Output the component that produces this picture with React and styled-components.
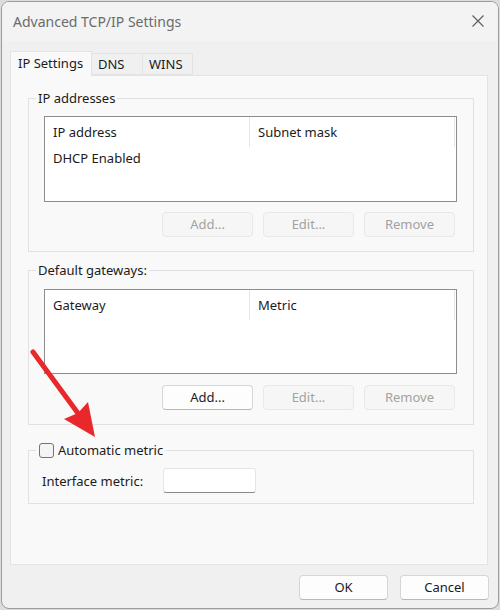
import React from 'react';
import styled, { createGlobalStyle } from 'styled-components';

const GlobalStyle = createGlobalStyle`
  html, body {
    margin: 0;
    padding: 0;
    background: #dcdcdc;
  }
  body {
    font-family: 'Noto Sans', 'Open Sans', 'Liberation Sans', sans-serif;
    font-size: 13px;
    color: #1b1b1b;
  }
`;

const Page = styled.div`
  position: relative;
  width: 500px;
  height: 610px;
  overflow: hidden;
`;

const Window = styled.div`
  box-sizing: border-box;
  width: 498px;
  height: 608px;
  margin: 1px 0 0 1px;
  border: 1px solid #9c9c9c;
  border-radius: 8px;
  overflow: hidden;
  display: flex;
  flex-direction: column;
  background: #f0f0f0;
`;

const TitleBar = styled.div`
  height: 38px;
  flex: none;
  display: flex;
  align-items: center;
  justify-content: space-between;
  padding: 0 13px 1px 11px;
  background: #f3f3f3;
  font-size: 14px;
  color: #6b6b6b;
`;

const CloseButton = styled.span`
  display: flex;
  width: 14px;
  height: 14px;
  color: #5c5c5c;
`;

const Body = styled.div`
  flex: 1;
  display: flex;
  flex-direction: column;
  padding: 9px 8px 0 8px;
`;

const TabStrip = styled.div`
  display: flex;
  align-items: flex-end;
  height: 25px;
  position: relative;
  z-index: 1;
`;

const Tab = styled.div`
  box-sizing: border-box;
  width: ${p => p.$w}px;
  height: ${p => (p.$active ? 25 : 22)}px;
  margin-bottom: ${p => (p.$active ? -1 : 0)}px;
  display: flex;
  align-items: center;
  padding: ${p => (p.$active ? '0 0 3px 7px' : '0 0 1px 6px')};
  border: 1px solid #e3e3e3;
  border-bottom: ${p => (p.$active ? 'none' : '1px solid #e3e3e3')};
  border-left: ${p => (p.$first || p.$active ? '1px solid #e3e3e3' : 'none')};
  background: ${p => (p.$active ? '#f9f9f9' : '#f0f0f0')};
  color: #1b1b1b;
`;

const Panel = styled.div`
  box-sizing: border-box;
  width: 478px;
  height: 490px;
  border: 1px solid #e3e3e3;
  background: #f9f9f9;
  padding: 13px 14px 0 17px;
  display: flex;
  flex-direction: column;
  gap: 9px;
`;

const Group = styled.fieldset`
  box-sizing: border-box;
  width: 446px;
  margin: ${p => p.$mt || 0}px 0 0;
  padding: 0;
  border: 1px solid #e1e1e1;
  min-width: 0;
`;

const Legend = styled.legend`
  margin-left: 7px;
  padding: 0 ${p => (p.$check ? 3 : 2)}px;
  line-height: 18px;
  display: flex;
  align-items: center;
  gap: 4px;
`;

const GroupBody = styled.div`
  padding: ${p => p.$pad};
`;

const ListBox = styled.div`
  box-sizing: border-box;
  height: ${p => p.$h}px;
  border: 1px solid #8d8d8d;
  background: #ffffff;
`;

const HeaderRow = styled.div`
  display: flex;
  height: 30px;
`;

const HeaderCell = styled.div`
  box-sizing: border-box;
  width: ${p => p.$w}px;
  padding-left: 8px;
  display: flex;
  align-items: center;
  border-right: 1px solid #e5e5e5;
`;

const Row = styled.div`
  padding-left: 8px;
  height: 22px;
  line-height: 22px;
`;

const ButtonRow = styled.div`
  display: flex;
  justify-content: flex-end;
  gap: 10px;
  margin-top: ${p => p.$mt}px;
  padding-right: 2px;
`;

const Button = styled.button`
  box-sizing: border-box;
  width: ${p => p.$w || 91}px;
  height: 25px;
  border-radius: 4px;
  font-family: inherit;
  font-size: 13px;
  padding: 0 0 1px;
  border: 1px solid ${p => (p.disabled ? '#e8e8e8' : '#d6d6d6')};
  border-bottom-color: ${p => (p.disabled ? '#e8e8e8' : '#b9b9b9')};
  background: ${p => (p.disabled ? '#f6f6f6' : '#fdfdfd')};
  color: ${p => (p.disabled ? '#a2a2a2' : '#1b1b1b')};
`;

const CheckBox = styled.span`
  box-sizing: border-box;
  width: 15px;
  height: 15px;
  border: 1px solid #737373;
  border-radius: 3px;
  background: #f4f4f4;
`;

const MetricRow = styled.div`
  display: flex;
  align-items: center;
  gap: 20px;
`;

const TextInput = styled.div`
  box-sizing: border-box;
  width: 93px;
  height: 25px;
  background: #ffffff;
  border: 1px solid #e6e6e6;
  border-bottom-color: #8a8a8a;
  border-radius: 3px;
`;

const Footer = styled.div`
  display: flex;
  justify-content: flex-end;
  gap: 12px;
  padding: 10px 1px 0 0;
`;

const Arrow = styled.svg`
  position: absolute;
  left: 0;
  top: 0;
  pointer-events: none;
`;

function CloseIcon() {
  return (
    <svg width="14" height="14" viewBox="0 0 14 14">
      <path d="M1.5 1.5 L12.5 12.5 M12.5 1.5 L1.5 12.5" stroke="currentColor" strokeWidth="1.1" fill="none" />
    </svg>
  );
}

function AddressList({ cols, rows, height }) {
  return (
    <ListBox $h={height}>
      <HeaderRow>
        <HeaderCell $w={205}>{cols[0]}</HeaderCell>
        <HeaderCell $w={205}>{cols[1]}</HeaderCell>
      </HeaderRow>
      {rows.map(r => (
        <Row key={r}>{r}</Row>
      ))}
    </ListBox>
  );
}

export default function App() {
  return (
    <Page>
      <GlobalStyle />
      <Window>
        <TitleBar>
          <span>Advanced TCP/IP Settings</span>
          <CloseButton>
            <CloseIcon />
          </CloseButton>
        </TitleBar>
        <Body>
          <TabStrip>
            <Tab $w={82} $active $first>IP Settings</Tab>
            <Tab $w={51}>DNS</Tab>
            <Tab $w={50}>WINS</Tab>
          </TabStrip>
          <Panel>
            <Group>
              <Legend>IP addresses</Legend>
              <GroupBody $pad="9px 16px 14px 15px">
                <AddressList cols={['IP address', 'Subnet mask']} rows={['DHCP Enabled']} height={86} />
                <ButtonRow $mt={10}>
                  <Button disabled>Add...</Button>
                  <Button disabled>Edit...</Button>
                  <Button disabled>Remove</Button>
                </ButtonRow>
              </GroupBody>
            </Group>
            <Group>
              <Legend>Default gateways:</Legend>
              <GroupBody $pad="10px 16px 14px 15px">
                <AddressList cols={['Gateway', 'Metric']} rows={[]} height={85} />
                <ButtonRow $mt={11}>
                  <Button>Add...</Button>
                  <Button disabled>Edit...</Button>
                  <Button disabled>Remove</Button>
                </ButtonRow>
              </GroupBody>
            </Group>
            <Group $mt={7}>
              <Legend $check>
                <CheckBox />
                Automatic metric
              </Legend>
              <GroupBody $pad="9px 16px 10px 13px">
                <MetricRow>
                  <span>Interface metric:</span>
                  <TextInput />
                </MetricRow>
              </GroupBody>
            </Group>
          </Panel>
          <Footer>
            <Button $w={89}>OK</Button>
            <Button $w={89}>Cancel</Button>
          </Footer>
        </Body>
      </Window>
      <Arrow width="500" height="610" viewBox="0 0 500 610">
        <line x1="33" y1="352" x2="80" y2="416" stroke="#e8282b" strokeWidth="5" strokeLinecap="round" />
        <polygon points="95,437 64,419 78,413 88,402" fill="#e8282b" />
      </Arrow>
    </Page>
  );
}
